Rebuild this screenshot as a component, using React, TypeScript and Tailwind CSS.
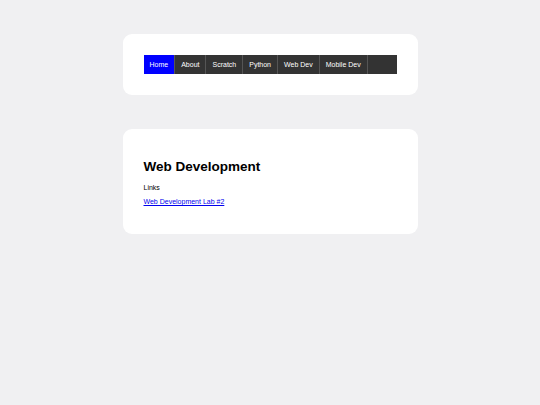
const navItems = ["Home", "About", "Scratch", "Python", "Web Dev", "Mobile Dev"];

export default function App() {
  return (
    <div className="min-h-[405px] bg-[#f0f0f2] pt-[34px] font-['Liberation_Sans',Arial,sans-serif] text-black">
      <div className="mx-auto w-[295px] rounded-[9px] bg-white p-[21px]">
        <ul className="flex bg-[#333333]">
          {navItems.map((item, i) => (
            <li
              key={item}
              className={`border-r border-[#555555] px-[6px] py-[5.5px] text-[7px] leading-[8px] text-white ${
                i === 0 ? "bg-[#0000ff]" : ""
              }`}
            >
              {item}
            </li>
          ))}
        </ul>
      </div>

      <div className="mx-auto mt-[34px] w-[295px] rounded-[9px] bg-white p-[21px]">
        <h1 className="mt-[9px] mb-[9px] text-[13.5px] leading-[16px] font-bold">
          Web Development
        </h1>
        <p className="text-[7px] leading-[8px]">Links</p>
        <p className="mt-[6px] mb-[7px] text-[7px] leading-[8px]">
          <a href="#" className="text-[#0000ee] underline">
            Web Development Lab #2
          </a>
        </p>
      </div>
    </div>
  );
}
